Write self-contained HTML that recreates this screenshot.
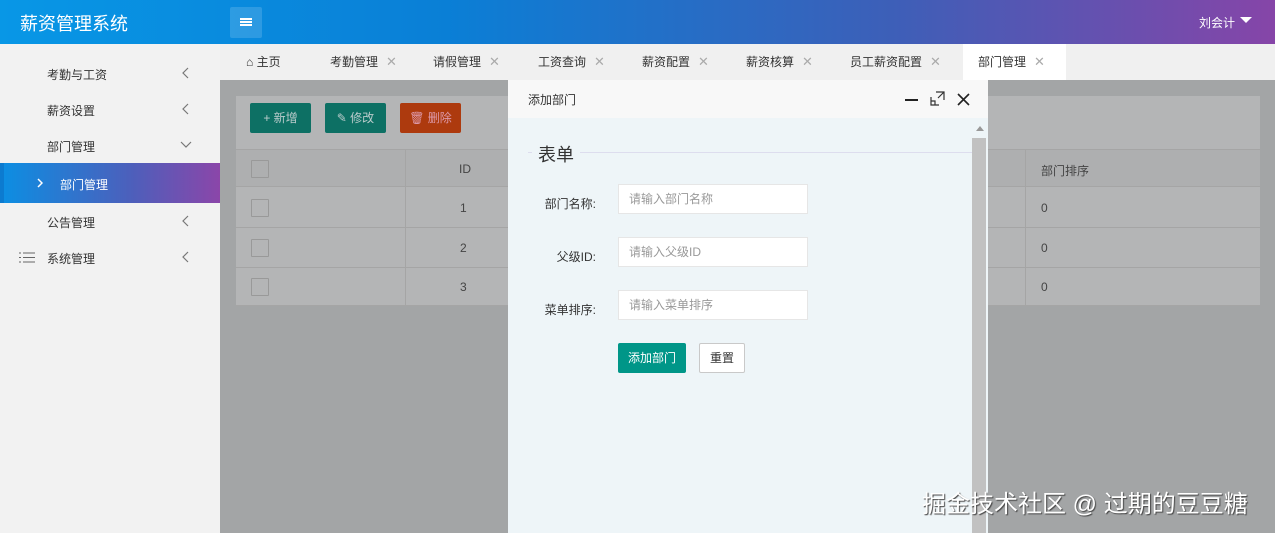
<!DOCTYPE html>
<html><head><meta charset="utf-8"><style>
*{margin:0;padding:0;box-sizing:border-box}
body{width:1275px;height:533px;overflow:hidden;position:relative;font-family:"Liberation Sans","Noto Sans CJK SC",sans-serif;font-size:12px;color:#333;background:#a3a5a6}
.abs{position:absolute}
.hdr{left:0;top:0;width:1275px;height:44px;background:linear-gradient(90deg,#0897e6 0%,#0a7fd6 35%,#3d5fb8 70%,#8645a8 100%)}
.side{left:0;top:44px;width:220px;height:489px;background:#f2f2f2}
.side .it{position:absolute;left:47px;font-size:12px;color:#333}
.side svg.ar{position:absolute;left:182px}
.tabs{left:220px;top:44px;width:1055px;height:36px;background:#f0f0f0}
.tab{position:absolute;top:0;height:36px;line-height:36px;font-size:12px;color:#333}
.tab .x{color:#aaa;margin-left:8px;font-size:13px}
.panel{left:236px;top:96px;width:1024px;height:210px;background:#b4b5b6}
.btn{position:absolute;top:103px;height:30px;line-height:30px;color:#bcc;font-size:12px;border-radius:2px;text-align:center}
.cb{position:absolute;left:251px;width:18px;height:18px;border:1px solid #999;border-radius:1px;background:#b4b5b6}
.dlg{left:508px;top:80px;width:480px;height:453px;background:#eef5f8}
.dt{left:508px;top:80px;width:480px;height:38px;background:#f8f8f8}
.lab{position:absolute;font-size:12px;color:#333;text-align:right;width:80px;left:516px}
.inp{position:absolute;left:618px;width:190px;height:30px;background:#fff;border:1px solid #e6e6e6;padding-left:10px;line-height:28px;color:#999;font-size:12px}
.t{color:#444}
</style></head><body>
<div class="abs hdr"></div>
<div class="abs" style="left:20px;top:10px;color:#fff;font-size:18px">薪资管理系统</div>
<div class="abs" style="left:230px;top:7px;width:32px;height:31px;background:rgba(255,255,255,.15);border-radius:2px"></div>
<div class="abs" style="left:240px;top:18px;width:12px;height:1.5px;background:#fff;box-shadow:0 3px 0 #fff,0 6px 0 #fff"></div>
<div class="abs" style="left:1199px;top:14px;color:#fff;font-size:12px">刘会计</div>
<div class="abs" style="left:1240px;top:17px;border-left:6px solid transparent;border-right:6px solid transparent;border-top:6px solid #fff"></div>

<div class="abs side">
<div class="it" style="top:22px">考勤与工资</div><svg class="ar" style="top:23px" width="8" height="12"><path d="M6 1L1 6L6 11" fill="none" stroke="#777" stroke-width="1.2"/></svg>
<div class="it" style="top:58px">薪资设置</div><svg class="ar" style="top:59px" width="8" height="12"><path d="M6 1L1 6L6 11" fill="none" stroke="#777" stroke-width="1.2"/></svg>
<div class="it" style="top:94px">部门管理</div><svg class="ar" style="top:97px;left:180px" width="12" height="8"><path d="M1 1L6 6L11 1" fill="none" stroke="#777" stroke-width="1.2"/></svg>
<div style="position:absolute;left:0;top:119px;width:220px;height:40px;background:linear-gradient(90deg,#0b8fe3,#4d5fbb 60%,#8b46a9)"></div>
<div style="position:absolute;left:0;top:119px;width:4px;height:40px;background:#0c7bd0"></div>
<svg style="position:absolute;left:37px;top:134px" width="6" height="10"><path d="M1 1L5 5L1 9" fill="none" stroke="#fff" stroke-width="1.5"/></svg>
<div class="it" style="top:132px;left:60px;color:#fff">部门管理</div>
<div class="it" style="top:170px">公告管理</div><svg class="ar" style="top:171px" width="8" height="12"><path d="M6 1L1 6L6 11" fill="none" stroke="#777" stroke-width="1.2"/></svg>
<div class="it" style="top:206px">系统管理</div><svg class="ar" style="top:207px" width="8" height="12"><path d="M6 1L1 6L6 11" fill="none" stroke="#777" stroke-width="1.2"/></svg>
<svg style="position:absolute;left:19px;top:208px" width="16" height="11"><path d="M0 1H2M4 1H16M0 5.5H2M4 5.5H16M0 10H2M4 10H16" stroke="#666" stroke-width="1"/></svg>
</div>

<div class="abs tabs">
<div class="tab" style="left:26px">⌂ 主页</div>
<div class="tab" style="left:110px">考勤管理<span class="x">✕</span></div>
<div class="tab" style="left:213px">请假管理<span class="x">✕</span></div>
<div class="tab" style="left:318px">工资查询<span class="x">✕</span></div>
<div class="tab" style="left:422px">薪资配置<span class="x">✕</span></div>
<div class="tab" style="left:526px">薪资核算<span class="x">✕</span></div>
<div class="tab" style="left:630px">员工薪资配置<span class="x">✕</span></div>
<div class="tab" style="left:743px;width:103px;background:#fff;padding-left:15px">部门管理<span class="x">✕</span></div>
</div>

<div class="abs panel"></div>
<div class="btn" style="left:250px;width:61px;background:#0d7064">+ 新增</div>
<div class="btn" style="left:325px;width:61px;background:#0d7064">✎ 修改</div>
<div class="btn" style="left:400px;width:61px;background:#ad3a0e;color:#d9a">🗑 删除</div>
<div class="abs" style="left:236px;top:149px;width:1024px;height:38px;background:#aeafb0;border-top:1px solid #a5a5a5;border-bottom:1px solid #a5a5a5"></div>
<div class="abs" style="left:405px;top:149px;width:1px;height:156px;background:#a5a5a5"></div>
<div class="abs" style="left:1025px;top:149px;width:1px;height:156px;background:#a5a5a5"></div>
<div class="abs" style="left:236px;top:227px;width:1024px;height:1px;background:#a5a5a5"></div>
<div class="abs" style="left:236px;top:267px;width:1024px;height:1px;background:#a5a5a5"></div>
<div class="abs" style="left:236px;top:305px;width:1024px;height:1px;background:#a5a5a5"></div>
<div class="cb" style="top:160px;background:#aeafb0"></div><div class="cb" style="top:199px"></div><div class="cb" style="top:239px"></div><div class="cb" style="top:278px"></div>
<div class="abs t" style="left:459px;top:162px">ID</div>
<div class="abs t" style="left:460px;top:201px">1</div>
<div class="abs t" style="left:460px;top:241px">2</div>
<div class="abs t" style="left:460px;top:280px">3</div>
<div class="abs t" style="left:1041px;top:162px">部门排序</div>
<div class="abs t" style="left:1041px;top:201px">0</div>
<div class="abs t" style="left:1041px;top:241px">0</div>
<div class="abs t" style="left:1041px;top:280px">0</div>

<div class="abs dlg"></div>
<div class="abs dt"></div>
<div class="abs" style="left:528px;top:91px;font-size:12px;color:#333">添加部门</div>
<div class="abs" style="left:905px;top:99px;width:13px;height:2px;background:#222"></div>
<svg class="abs" style="left:930px;top:91px" width="15" height="15"><path d="M1 6V14H9M6 1H14V9M14 1L8 7M1 10H5V14" fill="none" stroke="#333" stroke-width="1.2"/></svg>
<svg class="abs" style="left:957px;top:93px" width="13" height="13"><path d="M1 1L12 12M12 1L1 12" stroke="#222" stroke-width="1.6"/></svg>
<div class="abs" style="left:972px;top:138px;width:14px;height:395px;background:#c1c1c1"></div>
<div class="abs" style="left:976px;top:126px;border-left:4px solid transparent;border-right:4px solid transparent;border-bottom:5px solid #999"></div>
<div class="abs" style="left:528px;top:152px;width:444px;height:1px;background:#dde"></div>
<div class="abs" style="left:532px;top:141px;padding:0 6px;font-size:18px;color:#333;background:#eef5f8">表单</div>
<div class="lab" style="top:195px">部门名称:</div><div class="inp" style="top:184px">请输入部门名称</div>
<div class="lab" style="top:248px">父级ID:</div><div class="inp" style="top:237px">请输入父级ID</div>
<div class="lab" style="top:301px">菜单排序:</div><div class="inp" style="top:290px">请输入菜单排序</div>
<div class="abs" style="left:618px;top:343px;width:68px;height:30px;background:#009688;color:#fff;line-height:30px;text-align:center;border-radius:2px">添加部门</div>
<div class="abs" style="left:699px;top:343px;width:46px;height:30px;background:#fff;border:1px solid #c9c9c9;line-height:28px;text-align:center;border-radius:2px">重置</div>

<div class="abs" style="left:922px;top:484px;font-size:24px;color:#fff;text-shadow:1px 1px 1px #444;white-space:nowrap">掘金技术社区 @ 过期的豆豆糖</div>
</body></html>
